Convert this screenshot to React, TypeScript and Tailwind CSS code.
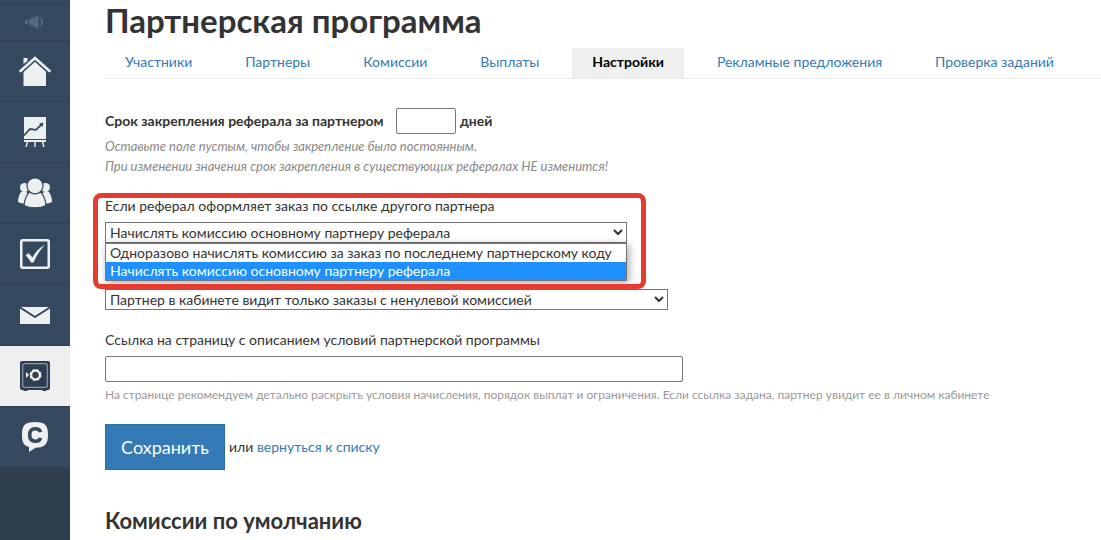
import type { ReactNode } from 'react'

type Tab = {
    label: string
    active?: boolean
}

type NavItem = {
    label: string
    icon: ReactNode
    active?: boolean
}

const tabs: Tab[] = [
    { label: 'Участники' },
    { label: 'Партнеры' },
    { label: 'Комиссии' },
    { label: 'Выплаты' },
    { label: 'Настройки', active: true },
    { label: 'Рекламные предложения' },
    { label: 'Проверка заданий' },
]

const orderOptions = [
    'Одноразово начислять комиссию за заказ по последнему партнерскому коду',
    'Начислять комиссию основному партнеру реферала',
]

function MegaphoneIcon() {
    return (
        <svg width="20" height="14" viewBox="0 0 20 14" fill="#506a84" aria-hidden="true">
            <path d="M0 5h3v4H0z" />
            <path d="M4 4.500 13.500 .5v13L4 9.500z" />
            <path d="M15 2.500c4 0 4 9 0 9 1.300-2.500 1.300-6.500 0-9z" />
        </svg>
    )
}

function HomeIcon() {
    return (
        <svg width="32" height="30" viewBox="0 0 32 30" aria-hidden="true">
            <path d="M4.500 8V2h4v3" fill="#ecf0f1" />
            <path d="M4.500 15.500 16 5l11 10.500V30H4.500z" fill="#ecf0f1" />
            <path d="M1.500 15.500 16 2.300l14.500 13.200" fill="none" stroke="#34495e" strokeWidth="5" />
            <path d="M1.500 15 16 2l14.500 13" fill="none" stroke="#ecf0f1" strokeWidth="2.600" strokeLinecap="round" />
        </svg>
    )
}

function ChartIcon() {
    return (
        <svg width="22" height="30" viewBox="0 0 22 30" aria-hidden="true">
            <path d="M0 0h22v22H0zM0 23h22v2H0z" fill="#ecf0f1" />
            <path d="m3.500 25-1.500 5M11 25v5M18.500 25l1.500 5" stroke="#ecf0f1" strokeWidth="1.400" />
            <path d="m0 18.500 6-6.500 6 .8L18 7" fill="none" stroke="#34495e" strokeWidth="1.800" />
            <path d="m15 6.500 4.500-1-1 4.500z" fill="#34495e" />
        </svg>
    )
}

function UsersIcon() {
    return (
        <svg width="34" height="30" viewBox="0 0 34 30" fill="#ecf0f1" aria-hidden="true">
            <circle cx="6.500" cy="9.500" r="4.500" />
            <circle cx="27.500" cy="9.500" r="4.500" />
            <path d="M3 14c-2 3-3 6-3 10 2 1 4 1.500 6 1.500l4-10L6.500 13zM31 14c2 3 3 6 3 10-2 1-4 1.500-6 1.500l-4-10 3.500-2.500z" />
            <g stroke="#34495e" strokeWidth="1.200">
                <path d="M11 14.500c-3 3-4.500 8-5 13 6 3 16 3 22 0-.5-5-2-10-5-13z" />
                <circle cx="17" cy="7.800" r="8" />
            </g>
        </svg>
    )
}

function CheckIcon() {
    return (
        <svg width="30" height="30" viewBox="0 0 30 30" aria-hidden="true">
            <rect x="1.250" y="1.250" width="27.500" height="27.500" rx="1.500" fill="none" stroke="#ecf0f1" strokeWidth="2.500" />
            <path d="M5.500 16.500 8.500 14l4 4.500C15.500 12.500 19.500 8.500 25 6c-5 5-8.500 10.500-11.500 17.500h-2.500C9.500 21 8 18.500 5.500 16.500z" fill="#ecf0f1" />
        </svg>
    )
}

function MailIcon() {
    return (
        <svg width="30" height="17" viewBox="0 0 30 17" aria-hidden="true">
            <path d="M.5 0h29L15 9.300z" fill="#ecf0f1" />
            <path d="M0 1.500 15 11 30 1.500V17H0z" fill="#ecf0f1" />
            <path d="M.5.700 15 9.800 29.500.700" fill="none" stroke="#34495e" strokeWidth="1.500" />
        </svg>
    )
}

function SafeIcon() {
    return (
        <svg width="30" height="30" viewBox="0 0 30 30" aria-hidden="true">
            <path d="M2 0h26a2 2 0 0 1 2 2v25a2 2 0 0 1-2 2h-1l-1 1h-3l-1-1H8l-1 1H4l-1-1H2a2 2 0 0 1-2-2V2a2 2 0 0 1 2-2z" fill="#2c3e50" />
            <rect x="2.700" y="2.700" width="24.600" height="23.600" rx="2" fill="none" stroke="#8f9aa5" strokeWidth="1.200" />
            <path d="m6 11 3 3-3 3z" fill="#efefef" />
            <circle cx="15.500" cy="14" r="4.300" fill="none" stroke="#efefef" strokeWidth="2.200" />
            <circle cx="15.500" cy="14" r="5.300" fill="none" stroke="#efefef" strokeWidth="1.400" strokeDasharray="2.700 1.460" />
        </svg>
    )
}

function ChatIcon() {
    return (
        <svg width="26" height="30" viewBox="0 0 26 30" aria-hidden="true">
            <path d="M13 0c10 0 13 3 13 13 0 9-3 12.500-12.500 12.800L7 30v-5C1.500 23.500 0 20 0 13 0 3 3 0 13 0z" fill="#efefef" />
            <path d="M18.500 10.200C18 7.800 16 6.800 13.300 6.800c-4 0-5.600 2-5.600 6.200s1.600 6.200 5.600 6.200c2.700 0 4.700-1 5.200-3.400" fill="none" stroke="#34495e" strokeWidth="3.600" />
        </svg>
    )
}

const navItems: NavItem[] = [
    { label: 'Главная', icon: <HomeIcon /> },
    { label: 'Статистика', icon: <ChartIcon /> },
    { label: 'Пользователи', icon: <UsersIcon /> },
    { label: 'Задачи', icon: <CheckIcon /> },
    { label: 'Почта', icon: <MailIcon /> },
    { label: 'Партнерская программа', icon: <SafeIcon />, active: true },
    { label: 'Чат', icon: <ChatIcon /> },
]

function Sidebar() {
    return (
        <nav className="w-[70px] shrink-0 bg-[#2e3e4f]">
            <div className="h-1 border-b border-[#2c3e50] bg-[#34495e]" />
            <a
                href="#news"
                aria-label="Новости"
                className="flex h-[37px] items-center justify-center border-b border-[#2c3e50] bg-[#34495e]"
            >
                <MegaphoneIcon />
            </a>
            {navItems.map((item) => (
                <a
                    key={item.label}
                    href="#section"
                    aria-label={item.label}
                    className={`flex h-[61px] items-center justify-center border-b border-[#2c3e50] ${
                        item.active ? 'bg-[#efefef]' : 'bg-[#34495e]'
                    }`}
                >
                    {item.icon}
                </a>
            ))}
        </nav>
    )
}

function Tabs() {
    return (
        <nav className="mt-2 flex gap-[13px] border-b border-[#ebebeb]">
            {tabs.map((tab) => (
                <a
                    key={tab.label}
                    href="#tab"
                    className={`px-5 pt-[3px] pb-[5px] leading-[22px] whitespace-nowrap ${
                        tab.active ? 'bg-[#efefef] font-bold text-black' : 'text-[#337ab7]'
                    }`}
                >
                    {tab.label}
                </a>
            ))}
        </nav>
    )
}

function OrderRule() {
    return (
        <div className="relative mt-5">
            <label htmlFor="order-rule" className="block">
                Если реферал оформляет заказ по ссылке другого партнера
            </label>
            <div className="relative mt-[6px] w-[522px]">
                <select
                    id="order-rule"
                    defaultValue={orderOptions[1]}
                    className="block h-[21px] w-full border border-[#767676] bg-white"
                >
                    {orderOptions.map((option) => (
                        <option key={option}>{option}</option>
                    ))}
                </select>
                <ul
                    role="listbox"
                    aria-label="Варианты начисления"
                    className="absolute top-full left-0 z-10 w-full border border-[#767676] bg-white shadow-[2px_2px_8px_rgba(0,0,0,0.35)]"
                >
                    {orderOptions.map((option, i) => (
                        <li
                            key={option}
                            role="option"
                            aria-selected={i === 1}
                            className={`h-[18px] px-1 leading-[18px] whitespace-nowrap ${
                                i === 1 ? 'bg-[#1e90ff] text-white' : ''
                            }`}
                        >
                            {option}
                        </li>
                    ))}
                </ul>
            </div>
            <div className="pointer-events-none absolute -top-[3px] -left-3 z-20 h-24 w-[553px] rounded-lg border-5 border-[#e63c30]" />
        </div>
    )
}

export default function App() {
    return (
        <div className="flex min-h-screen bg-white font-['Lato','Liberation_Sans',sans-serif] text-sm leading-5 text-[#333]">
            <Sidebar />
            <main className="min-w-0 flex-1 pl-[35px]">
                <h1 className="text-[33px] leading-10 font-bold">Партнерская программа</h1>
                <Tabs />

                <form className="pt-[29px]">
                    <div className="flex items-center gap-1 font-bold">
                        <label htmlFor="term" className="w-[287px]">
                            Срок закрепления реферала за партнером
                        </label>
                        <input id="term" type="text" className="h-[26px] w-[60px] rounded-xs border border-[#767676]" />
                        <span>дней</span>
                    </div>
                    <p className="mt-[2px] text-[13px] text-[#888] italic">
                        Оставьте поле пустым, чтобы закрепление было постоянным.
                        <br />
                        При изменении значения срок закрепления в существующих рефералах НЕ изменится!
                    </p>

                    <OrderRule />

                    <select
                        aria-label="Видимость заказов"
                        className="mt-[46px] block h-[21px] w-[563px] border border-[#767676] bg-white"
                    >
                        <option>Партнер в кабинете видит только заказы с ненулевой комиссией</option>
                    </select>

                    <label htmlFor="terms-url" className="mt-5 block">
                        Ссылка на страницу с описанием условий партнерской программы
                    </label>
                    <input
                        id="terms-url"
                        type="text"
                        className="mt-[6px] block h-[26px] w-[578px] rounded-xs border border-[#767676]"
                    />
                    <p className="mt-[3px] text-xs leading-5 text-[#999]">
                        На странице рекомендуем детально раскрыть условия начисления, порядок выплат и ограничения. Если
                        ссылка задана, партнер увидит ее в личном кабинете
                    </p>

                    <div className="mt-[19px] flex items-center gap-1">
                        <button
                            type="button"
                            className="h-[46px] w-[120px] border border-[#2e6da4] bg-[#337ab7] text-lg text-white"
                        >
                            Сохранить
                        </button>
                        <span>
                            или{' '}
                            <a href="#list" className="text-[#337ab7]">
                                вернуться к списку
                            </a>
                        </span>
                    </div>
                </form>

                <h2 className="mt-[39px] text-[22px] leading-6 font-bold">Комиссии по умолчанию</h2>
            </main>
        </div>
    )
}
